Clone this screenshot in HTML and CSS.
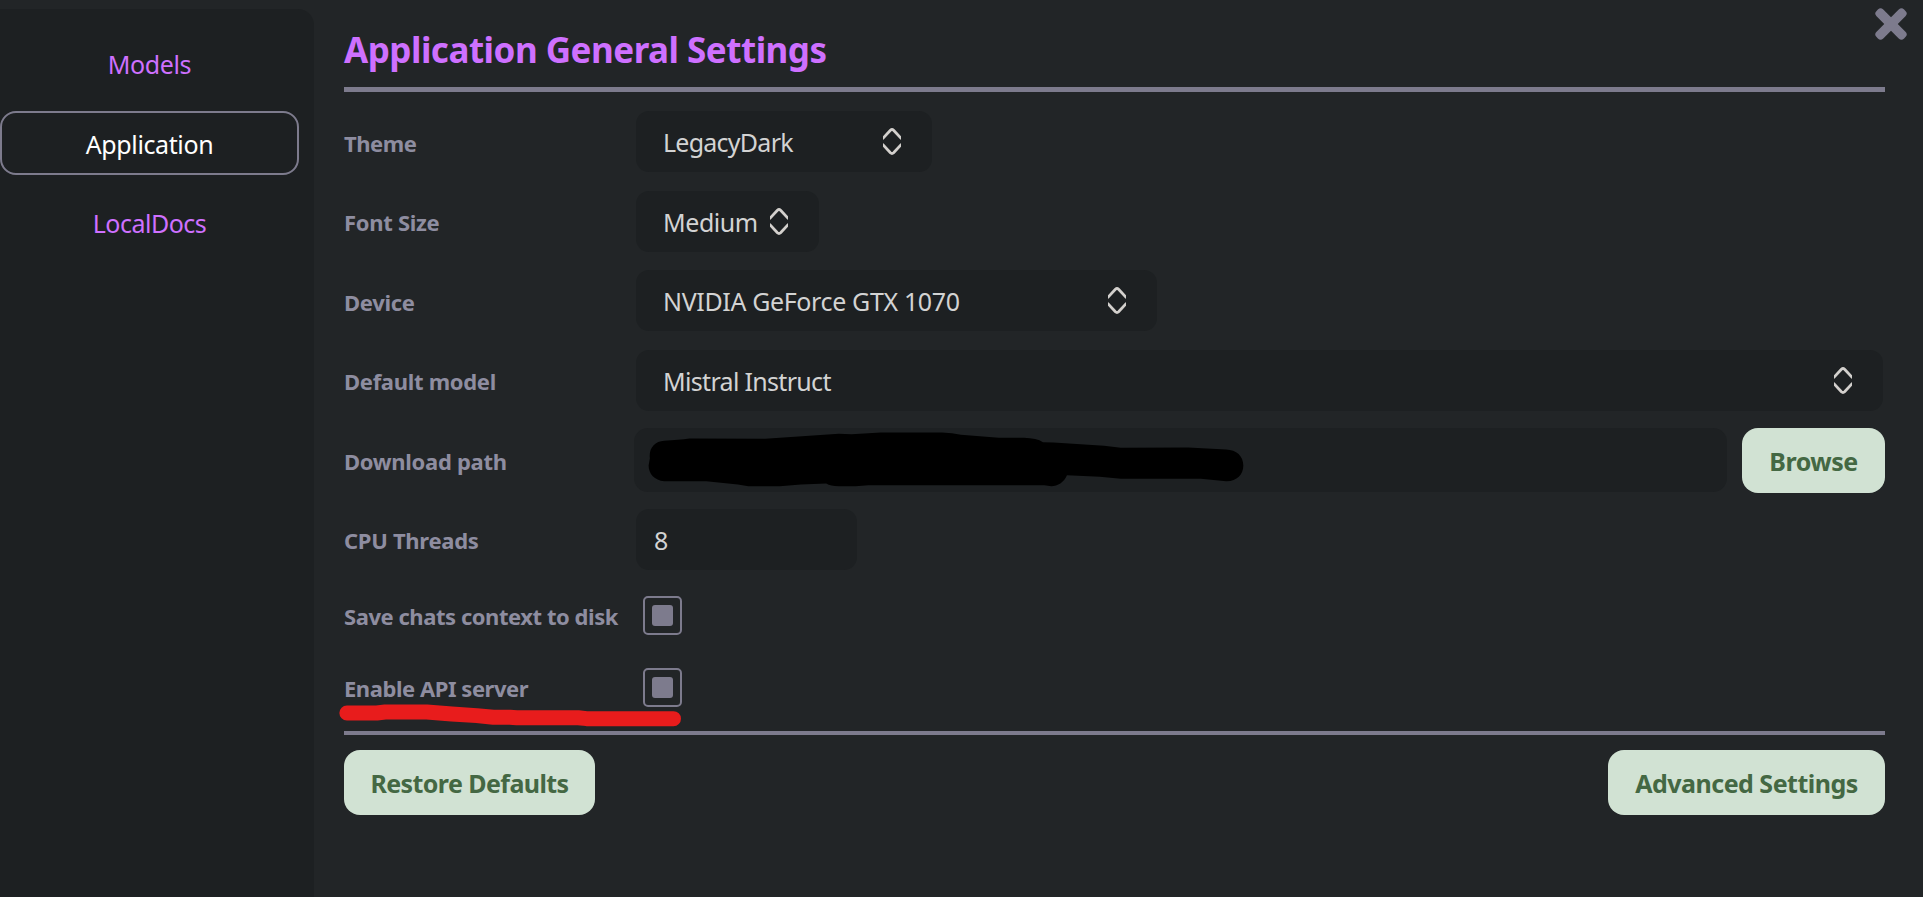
FILE: index.html
```html
<!DOCTYPE html>
<html lang="en">
<head>
<meta charset="utf-8">
<title>Application General Settings</title>
<link rel="stylesheet" href="styles.css">
</head>
<body>
<svg class="defs" aria-hidden="true">
  <symbol id="chevrons" viewBox="0 0 18 27"><path d="M-.6 10.9 7.4 2.2Q9 .8 10.6 2.2L18.6 10.9M-.6 16.1 7.4 24.8Q9 26.2 10.6 24.8L18.6 16.1"/></symbol>
</svg>
<div class="window">
  <nav class="sidebar">
    <a class="tab">Models</a>
    <a class="tab active">Application</a>
    <a class="tab docs">LocalDocs</a>
  </nav>
  <main class="panel">
    <header class="head"><h1>Application General Settings</h1></header>
    <div class="row">
      <label class="tight">Theme</label>
      <div class="select theme"><span>LegacyDark</span><svg class="chev"><use href="#chevrons"/></svg></div>
    </div>
    <div class="row">
      <label>Font Size</label>
      <div class="select size"><span>Medium</span><svg class="chev"><use href="#chevrons"/></svg></div>
    </div>
    <div class="row">
      <label>Device</label>
      <div class="select device"><span>NVIDIA GeForce GTX 1070</span><svg class="chev"><use href="#chevrons"/></svg></div>
    </div>
    <div class="row">
      <label>Default model</label>
      <div class="select model"><span>Mistral Instruct</span><svg class="chev"><use href="#chevrons"/></svg></div>
    </div>
    <div class="row">
      <label>Download path</label>
      <div class="path">
        <svg class="redaction" viewBox="33.3 37.5 1460 193.5" preserveAspectRatio="none"><path d="M105 76 Q140 73 165 69 L345 70 L520 55 L550 56 L620 51 L765 51 Q790 52 810 58 L900 67 L960 67 Q990 68 1005 80 L1030 81 L1150 91 L1190 97 L1350 96 L1440 102 C1465 103 1481 122 1481 150 C1481 178 1465 198 1440 197 L1380 190 L1190 190 L1140 184 L1062 179 C1055 200 1040 212 1025 212 L1008 209 L590 209 L560 212 L520 212 Q500 212 490 204 L430 207 L380 212 L305 212 L280 207 L205 197 L105 197 C82 195 68 175 68 150 L71 128 C68 100 82 77 105 76Z"/></svg>
      </div>
      <button class="btn browse">Browse</button>
    </div>
    <div class="row">
      <label>CPU Threads</label>
      <div class="number">8</div>
    </div>
    <div class="row check">
      <label class="tight">Save chats context to disk</label>
      <span class="box"></span>
    </div>
    <div class="row check">
      <label class="tight">Enable API server</label>
      <span class="box"></span>
      <svg class="underline" viewBox="0 360 1100 100"><path d="M50 399 H140 L165 396 H290 L365 402 L440 407 L490 412 H540 L560 413.5 H745 L770 416 H1031"/></svg>
    </div>
    <footer class="foot">
      <button class="btn restore">Restore Defaults</button>
      <button class="btn advanced">Advanced Settings</button>
    </footer>
  </main>
  <svg class="close" viewBox="-16 -16 32 32"><rect x="-19.5" y="-4.75" width="39" height="9.5" rx="3.8" transform="rotate(45)"/><rect x="-19.5" y="-4.75" width="39" height="9.5" rx="3.8" transform="rotate(-45)"/></svg>
</div>
</body>
</html>
```
FILE: styles.css
```css
* { box-sizing: border-box; }
body {
  margin: 0;
  background: #222527;
  font-family: "Noto Sans", sans-serif;
  overflow: hidden;
}
.defs { display: none; }
.window { position: relative; display: flex; height: 897px; }

.sidebar {
  width: 314px;
  margin-top: 9px;
  padding-top: 22px;
  background: #1d2022;
  border-radius: 0 16px 0 0;
}
.tab {
  display: flex;
  align-items: center;
  justify-content: center;
  width: 299px;
  height: 64px;
  margin-bottom: 16px;
  padding-top: 2px;
  border: 2px solid transparent;
  border-radius: 16px;
  font-size: 25px;
  letter-spacing: -.38px;
  color: #ce70ff;
}
.active { color: #fff; border-color: #7d7b8d; }
.docs { padding-top: 0; letter-spacing: -.48px; }

.panel { width: 1541px; margin-left: 30px; }
.head { height: 92px; margin-bottom: 10px; border-bottom: 5px solid #7d7b8d; }
h1 {
  margin: 0;
  font-size: 35px;
  line-height: 100px;
  letter-spacing: -.5px;
  color: #ce70ff;
}

.row {
  position: relative;
  display: flex;
  align-items: center;
  height: 79.5px;
  font-size: 25px;
  color: #d3d3d3;
}
label {
  width: 292px;
  padding-top: 2px;
  font-size: 22px;
  font-weight: 700;
  letter-spacing: -.3px;
  color: #8e8da0;
  white-space: nowrap;
}
.tight { letter-spacing: -.45px; }

.select, .number {
  display: flex;
  align-items: center;
  justify-content: space-between;
  height: 61px;
  background: #1d2022;
  border-radius: 13px;
}
.select { padding: 1px 31px 0 27px; }
.theme { width: 296px; letter-spacing: -.75px; }
.size { width: 183px; letter-spacing: -.45px; }
.device { width: 521px; letter-spacing: -.36px; }
.model { width: 1247px; letter-spacing: -.68px; }
.chev {
  flex: none;
  width: 18px;
  height: 27px;
  margin-bottom: 1px;
  fill: none;
  stroke: #d3d0cd;
  stroke-width: 2.8;
}
.number { width: 221px; padding: 1px 18px 0; }

.path {
  position: relative;
  width: 1093px;
  height: 64.5px;
  margin-left: -2px;
  background: #1d2022;
  border-radius: 14px;
}
.redaction { position: absolute; left: 0; top: 0; width: 614.5px; height: 64.5px; fill: #000; }

.check { height: 72px; }
.check label { padding-top: 1px; }
.box {
  display: flex;
  width: 39px;
  height: 39px;
  margin-left: 6.5px;
  border: 2px solid #7d7b8d;
  border-radius: 5px;
  align-items: center;
  justify-content: center;
}
.box::before { content: ""; width: 21px; height: 21px; border-radius: 3px; background: #7d7b8d; }
.underline {
  position: absolute;
  left: -14px;
  top: 49px;
  width: 366.7px;
  height: 33.3px;
  fill: none;
  stroke: #e81c1c;
  stroke-width: 45;
  stroke-linecap: round;
  stroke-linejoin: round;
}

.foot {
  display: flex;
  justify-content: space-between;
  margin-top: 8px;
  padding-top: 15px;
  border-top: 4px solid #7d7b8d;
}
.btn {
  height: 65px;
  padding: 1px 0 0;
  border: 0;
  border-radius: 16px;
  background: #d1e2d3;
  color: #446843;
  font: 700 25px "Noto Sans", sans-serif;
  letter-spacing: -.5px;
}
.browse { width: 143px; margin: 1px 0 0 15px; }
.restore { width: 251px; letter-spacing: -.58px; }
.advanced { width: 277px; }

.close { position: absolute; left: 1875px; top: 8px; width: 32px; height: 32px; fill: #7d7b8d; }
```
